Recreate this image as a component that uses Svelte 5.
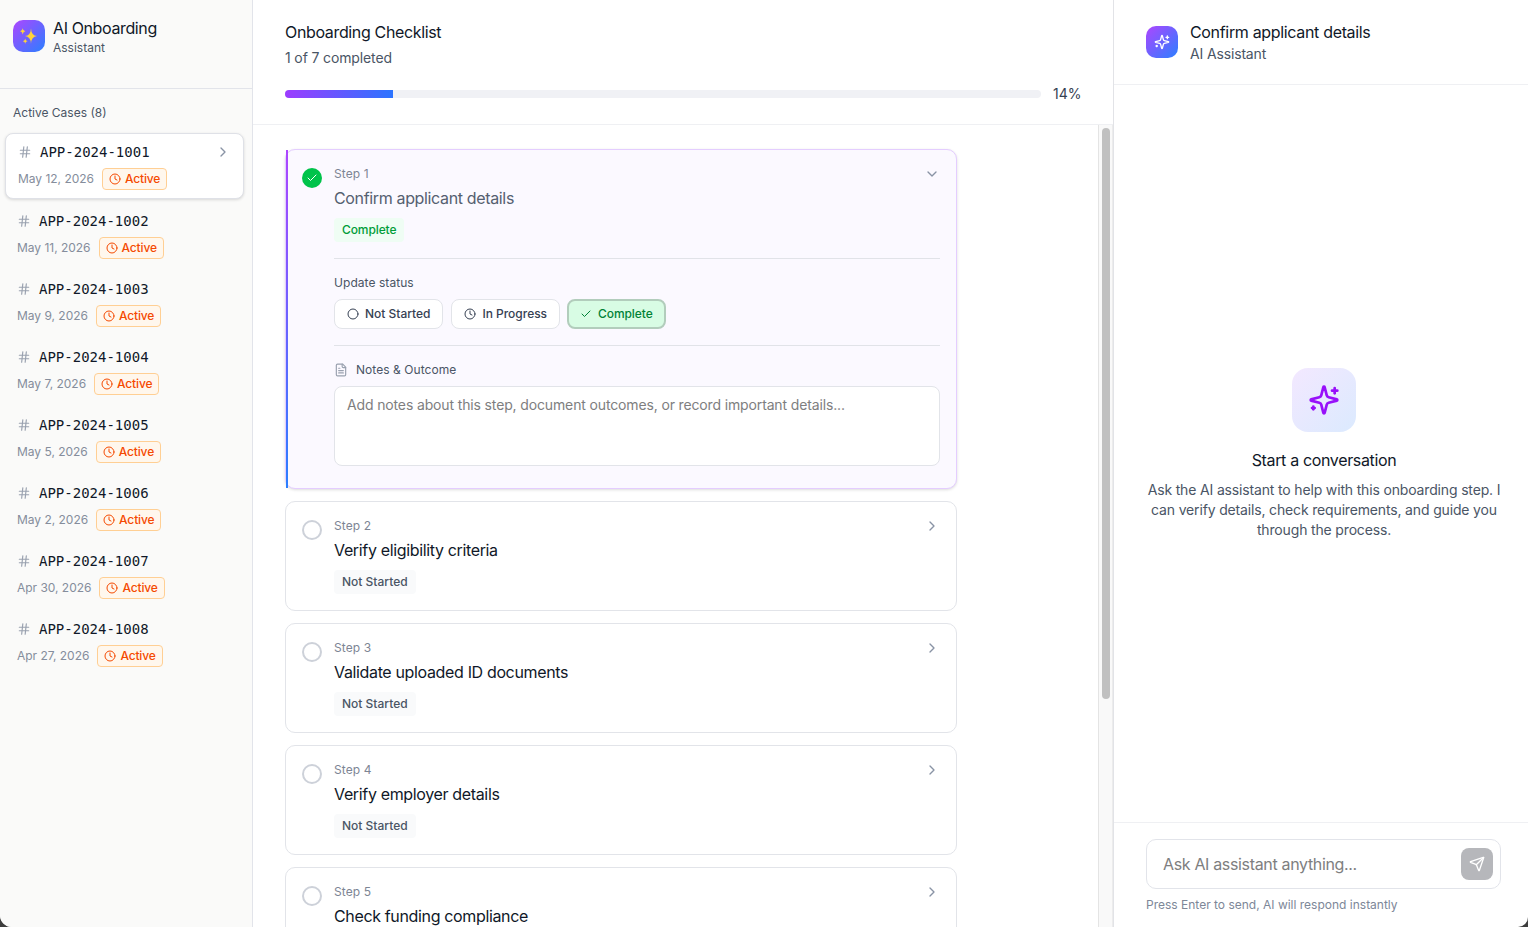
<script>
	let cases = [
		{ id: 'APP-2024-1001', date: 'May 12, 2026' },
		{ id: 'APP-2024-1002', date: 'May 11, 2026' },
		{ id: 'APP-2024-1003', date: 'May 9, 2026' },
		{ id: 'APP-2024-1004', date: 'May 7, 2026' },
		{ id: 'APP-2024-1005', date: 'May 5, 2026' },
		{ id: 'APP-2024-1006', date: 'May 2, 2026' },
		{ id: 'APP-2024-1007', date: 'Apr 30, 2026' },
		{ id: 'APP-2024-1008', date: 'Apr 27, 2026' },
	];

	let steps = [
		{ title: 'Confirm applicant details', status: 'Complete', notes: '' },
		{ title: 'Verify eligibility criteria', status: 'Not Started', notes: '' },
		{ title: 'Validate uploaded ID documents', status: 'Not Started', notes: '' },
		{ title: 'Verify employer details', status: 'Not Started', notes: '' },
		{ title: 'Check funding compliance', status: 'Not Started', notes: '' },
	];

	const totalSteps = 7;
	const statuses = [
		{ label: 'Not Started', icon: 'circle' },
		{ label: 'In Progress', icon: 'clock' },
		{ label: 'Complete', icon: 'check' },
	];

	const icons = {
		hash: ['M4 9h16', 'M4 15h16', 'M10 3 8 21', 'M16 3l-2 18'],
		circle: [],
		clock: ['M12 6v6l4 2'],
		check: ['M20 6 9 17l-5-5'],
		right: ['m9 18 6-6-6-6'],
		down: ['m6 9 6 6 6-6'],
		file: [
			'M15 2H6a2 2 0 0 0-2 2v16a2 2 0 0 0 2 2h12a2 2 0 0 0 2-2V7Z',
			'M14 2v4a2 2 0 0 0 2 2h4',
			'M10 9H8',
			'M16 13H8',
			'M16 17H8',
		],
		sparkles: [
			'M9.937 15.5A2 2 0 0 0 8.5 14.063l-6.135-1.582a.5.5 0 0 1 0-.962L8.5 9.936A2 2 0 0 0 9.937 8.5l1.582-6.135a.5.5 0 0 1 .963 0L14.063 8.5A2 2 0 0 0 15.5 9.937l6.135 1.581a.5.5 0 0 1 0 .964L15.5 14.063a2 2 0 0 0-1.437 1.437l-1.582 6.135a.5.5 0 0 1-.963 0z',
			'M20 3v4',
			'M22 5h-4',
			'M4 17v2',
			'M5 18H3',
		],
		send: [
			'M14.536 21.686a.5.5 0 0 0 .937-.024l6.5-19a.496.496 0 0 0-.635-.635l-19 6.5a.5.5 0 0 0-.024.937l7.93 3.18a2 2 0 0 1 1.112 1.11z',
			'm21.854 2.147-10.94 10.939',
		],
	};

	let selectedCase = 'APP-2024-1001';
	let openStep = 0;
	let message = '';

	$: completed = steps.filter((s) => s.status === 'Complete').length;
	$: percent = Math.round((completed / totalSteps) * 100);

	function setStatus(i, status) {
		steps[i].status = status;
	}
</script>

{#snippet icon(name, size)}
	<svg class="icon" width={size} height={size} viewBox="0 0 24 24">
		{#if name === 'circle' || name === 'clock'}
			<circle cx="12" cy="12" r="10" />
		{/if}
		{#each icons[name] as d}
			<path {d} />
		{/each}
	</svg>
{/snippet}

<div class="app">
	<aside class="sidebar">
		<div class="brand">
			<div class="logo">
				<svg width="18" height="18" viewBox="0 0 18 18" fill="#ffd43b">
					<path d="M11 1.5Q11.4 8.6 17 9Q11.4 9.4 11 16.8Q10.6 9.4 5 9Q10.6 8.6 11 1.5z" />
					<path d="M2.7 1.2Q3 4 5.3 4.3Q3 4.6 2.7 7.4Q2.4 4.6 .1 4.3Q2.4 4 2.7 1.2z" />
					<path d="M5.2 11.6Q5.4 13.9 7.5 14.2Q5.4 14.5 5.2 16.8Q5 14.5 2.9 14.2Q5 13.9 5.2 11.6z" />
				</svg>
			</div>
			<div>
				<div class="brand-name">AI Onboarding</div>
				<div class="brand-sub">Assistant</div>
			</div>
		</div>
		<div class="cases-title">Active Cases (8)</div>
		<div class="cases">
			{#each cases as c (c.id)}
				<button class="case" class:selected={c.id === selectedCase} on:click={() => (selectedCase = c.id)}>
					<span class="case-row">
						<span class="hash">{@render icon('hash', 14)}</span>
						<span class="case-id">{c.id}</span>
						{#if c.id === selectedCase}
							<span class="chevron">{@render icon('right', 16)}</span>
						{/if}
					</span>
					<span class="case-meta">
						<span class="date">{c.date}</span>
						<span class="active-badge">{@render icon('clock', 12)}Active</span>
					</span>
				</button>
			{/each}
		</div>
	</aside>

	<main class="main">
		<header class="main-header">
			<h1>Onboarding Checklist</h1>
			<p class="count">{completed} of {totalSteps} completed</p>
			<div class="progress">
				<div class="bar">
					<div class="fill" style="width: {(completed / totalSteps) * 100}%"></div>
				</div>
				<span class="percent">{percent}%</span>
			</div>
		</header>
		<div class="scroller">
			<div class="steps">
				{#each steps as step, i}
					<section class="step" class:open={openStep === i}>
						<div class="mark" class:done={step.status === 'Complete'}>
							{#if step.status === 'Complete'}
								{@render icon('check', 12)}
							{/if}
						</div>
						<div class="step-body">
							<button class="step-head" on:click={() => (openStep = openStep === i ? -1 : i)}>
								<span class="step-label">Step {i + 1}</span>
								<span class="chevron">{@render icon(openStep === i ? 'down' : 'right', 16)}</span>
							</button>
							<h2 class:muted={step.status === 'Complete'}>{step.title}</h2>
							<span class="tag" class:green={step.status === 'Complete'}>{step.status}</span>
							{#if openStep === i}
								<div class="part">
									<div class="part-title">Update status</div>
									<div class="status-row">
										{#each statuses as s}
											<button
												class="status"
												class:chosen={s.label === step.status}
												on:click={() => setStatus(i, s.label)}
											>
												{@render icon(s.icon, 12)}<span>{s.label}</span>
											</button>
										{/each}
									</div>
								</div>
								<div class="part">
									<div class="part-title with-icon">
										<span class="file">{@render icon('file', 14)}</span>Notes &amp; Outcome
									</div>
									<textarea
										bind:value={step.notes}
										placeholder="Add notes about this step, document outcomes, or record important details..."
									></textarea>
								</div>
							{/if}
						</div>
					</section>
				{/each}
			</div>
			<div class="track"><div class="thumb"></div></div>
		</div>
	</main>

	<aside class="assistant">
		<header class="assistant-header">
			<div class="logo">{@render icon('sparkles', 16)}</div>
			<div>
				<div class="assistant-title">Confirm applicant details</div>
				<div class="assistant-sub">AI Assistant</div>
			</div>
		</header>
		<div class="empty">
			<div class="empty-icon">{@render icon('sparkles', 32)}</div>
			<h3>Start a conversation</h3>
			<p>
				Ask the AI assistant to help with this onboarding step. I can verify details, check
				requirements, and guide you through the process.
			</p>
		</div>
		<footer>
			<div class="ask">
				<input bind:value={message} placeholder="Ask AI assistant anything..." />
				<button class="send" aria-label="Send">{@render icon('send', 16)}</button>
			</div>
			<div class="hint">Press Enter to send, AI will respond instantly</div>
		</footer>
	</aside>
</div>

<style>
	:global(body) {
		background: #3d3d3d;
	}
	.app {
		display: flex;
		height: 927px;
		overflow: hidden;
		background: #fff;
		border-radius: 0 0 10px 12px;
		font-family: Inter, "Liberation Sans", sans-serif;
		font-size: 16px;
		line-height: 24px;
		color: #101828;
	}
	.app * {
		box-sizing: border-box;
	}
	h1, h2, h3, p {
		margin: 0;
		font-size: 16px;
		font-weight: 400;
		letter-spacing: -0.35px;
	}
	button, input, textarea {
		font-family: inherit;
		color: inherit;
	}
	button {
		border: none;
		background: none;
		padding: 0;
		cursor: pointer;
		text-align: left;
	}
	.icon {
		display: block;
		flex: none;
		fill: none;
		stroke: currentColor;
		stroke-width: 2;
		stroke-linecap: round;
		stroke-linejoin: round;
	}
	.logo {
		display: flex;
		align-items: center;
		justify-content: center;
		width: 32px;
		height: 32px;
		border-radius: 10px;
		background: linear-gradient(135deg, #ad46ff, #2b7fff);
		color: #fff;
	}
	.chevron {
		color: #8993a5;
	}

	.sidebar {
		width: 253px;
		flex: none;
		border-right: 1px solid #e2e4ea;
		background: #fafaf9;
	}
	.brand {
		display: flex;
		gap: 8px;
		height: 89px;
		padding: 20px 13px;
		border-bottom: 1px solid #e2e4ea;
	}
	.brand-name {
		line-height: 17px;
		letter-spacing: -0.38px;
	}
	.brand-sub {
		margin-top: 3px;
		font-size: 12px;
		line-height: 16px;
		color: #4a5565;
	}
	.cases-title {
		padding: 16px 13px 12px;
		font-size: 12px;
		line-height: 16px;
		color: #4a5565;
	}
	.cases {
		display: flex;
		flex-direction: column;
		gap: 4px;
		padding: 0 8px 0 5px;
	}
	.case {
		display: block;
		padding: 8px 12px;
		border-radius: 8px;
	}
	.case.selected {
		background: #fff;
		border: 1px solid #dfe1e7;
		box-shadow: 0 1px 3px rgba(0, 0, 0, 0.14);
	}
	.case-row {
		display: flex;
		align-items: center;
		gap: 8px;
		height: 20px;
	}
	.case-row .chevron {
		margin-left: auto;
	}
	.hash {
		color: #99a1af;
	}
	.case-id {
		font-family: "DejaVu Sans Mono", monospace;
		font-size: 14px;
		line-height: 20px;
	}
	.case-meta {
		display: flex;
		align-items: center;
		gap: 8px;
		margin-top: 6px;
		font-size: 12px;
		line-height: 16px;
	}
	.date {
		letter-spacing: -0.02px;
		color: #858d9c;
	}
	.active-badge {
		display: flex;
		align-items: center;
		gap: 4px;
		height: 22px;
		padding: 0 6px;
		border: 1px solid #ffcf94;
		border-radius: 4px;
		background: #fff7ed;
		color: #f54900;
		font-weight: 500;
		letter-spacing: -0.15px;
	}

	.main {
		flex: 1;
		min-width: 0;
		display: flex;
		flex-direction: column;
	}
	.main-header {
		padding: 20px 32px;
		border-bottom: 1px solid #eff0f3;
	}
	.main-header .count {
		margin-top: 4px;
		font-size: 14px;
		line-height: 20px;
		letter-spacing: -0.13px;
		color: #4a5565;
	}
	.progress {
		display: flex;
		align-items: center;
		gap: 12px;
		margin-top: 16px;
	}
	.bar {
		flex: 1;
		height: 8px;
		overflow: hidden;
		border-radius: 4px;
		background: #f0f1f5;
	}
	.fill {
		height: 100%;
		background: linear-gradient(90deg, #9d3cff, #2b74ff);
	}
	.percent {
		width: 28px;
		font-size: 14px;
		line-height: 20px;
		color: #364153;
	}
	.scroller {
		flex: 1;
		min-height: 0;
		display: flex;
		justify-content: space-between;
		overflow: hidden;
	}
	.steps {
		display: flex;
		flex-direction: column;
		gap: 12px;
		width: 736px;
		padding: 24px 32px;
	}
	.track {
		width: 15px;
		padding: 3px 2px 0 3px;
		border-left: 1px solid #e4e4e4;
		border-right: 1px solid #ececec;
		background: #f9f9f9;
	}
	.thumb {
		width: 8px;
		height: 571px;
		border-radius: 4px;
		background: #c0c0c0;
	}
	.step {
		position: relative;
		display: flex;
		flex: none;
		gap: 12px;
		padding: 16px;
		border: 1px solid #e2e4e9;
		border-radius: 10px;
		background: #fff;
	}
	.step.open {
		border-color: #e4cdff;
		background: #fbf9ff;
		box-shadow: 0 1px 3px rgba(0, 0, 0, 0.14);
	}
	.step.open::before {
		content: '';
		position: absolute;
		left: 0;
		top: 0;
		bottom: 0;
		width: 2px;
		background: linear-gradient(#ad46ff, #2b7fff);
	}
	.mark {
		display: flex;
		align-items: center;
		justify-content: center;
		flex: none;
		width: 20px;
		height: 20px;
		margin-top: 2px;
		border: 2px solid #cdd1d9;
		border-radius: 50%;
	}
	.mark.done {
		border: none;
		background: #00c34a;
		color: #fff;
	}
	.step-body {
		flex: 1;
	}
	.step-head {
		display: flex;
		justify-content: space-between;
		width: 100%;
		height: 16px;
		font-size: 12px;
		line-height: 16px;
	}
	.step-label {
		letter-spacing: 0.1px;
		color: #7d8594;
	}
	h2 {
		margin-top: 4px;
	}
	h2.muted {
		color: #556070;
	}
	.tag {
		display: block;
		width: fit-content;
		margin-top: 8px;
		padding: 4px 8px;
		border-radius: 4px;
		background: #f9fafb;
		color: #4a5565;
		font-size: 12px;
		line-height: 16px;
		font-weight: 500;
	}
	.tag.green {
		background: #effdf4;
		color: #009c38;
		letter-spacing: -0.1px;
	}
	.part {
		margin-top: 16px;
		padding-top: 16px;
		border-top: 1px solid #e1e3e8;
	}
	.part-title {
		margin-bottom: 8px;
		font-size: 12px;
		line-height: 16px;
		letter-spacing: 0.06px;
		color: #4a5565;
	}
	.with-icon {
		display: flex;
		align-items: center;
		gap: 8px;
	}
	.file {
		color: #99a1af;
	}
	.status-row {
		display: flex;
		gap: 8px;
	}
	.status {
		display: flex;
		align-items: center;
		gap: 6px;
		height: 30px;
		padding: 0 12px;
		border: 1px solid #e2e4e9;
		border-radius: 8px;
		background: #fff;
		color: #364153;
		font-size: 12px;
		font-weight: 500;
		letter-spacing: -0.02px;
	}
	.status span {
		padding-bottom: 2px;
	}
	.status.chosen {
		margin-left: -1px;
		padding: 0 11px;
		border: 2px solid #b2cdbc;
		background: #d8fce4;
		color: #008236;
		letter-spacing: -0.08px;
	}
	textarea {
		display: block;
		width: 100%;
		height: 80px;
		margin-bottom: 6px;
		padding: 8px 12px;
		border: 1px solid #e2e4e9;
		border-radius: 8px;
		background: #fff;
		font-size: 14px;
		line-height: 20px;
		letter-spacing: -0.14px;
		resize: none;
	}
	textarea::placeholder, input::placeholder {
		color: #7e7e80;
		opacity: 1;
	}

	.assistant {
		width: 415px;
		flex: none;
		display: flex;
		flex-direction: column;
		border-left: 1px solid #e2e3e7;
	}
	.assistant-header {
		display: flex;
		align-items: center;
		gap: 12px;
		padding: 20px 32px;
		border-bottom: 1px solid #eff0f3;
	}
	.assistant-title {
		letter-spacing: -0.33px;
	}
	.assistant-sub {
		font-size: 14px;
		line-height: 20px;
		letter-spacing: -0.15px;
		color: #4a5565;
	}
	.empty {
		flex: 1;
		display: flex;
		flex-direction: column;
		align-items: center;
		justify-content: center;
		padding: 0 24px 0 30px;
		text-align: center;
	}
	.empty-icon {
		display: flex;
		align-items: center;
		justify-content: center;
		width: 64px;
		height: 64px;
		margin-bottom: 16px;
		border-radius: 16px;
		background: linear-gradient(135deg, #f3e8ff, #dbeafe);
		color: #9810fa;
	}
	.empty p {
		margin-top: 8px;
		font-size: 14px;
		line-height: 20px;
		letter-spacing: -0.16px;
		color: #4a5565;
	}
	footer {
		height: 105px;
		padding: 16px 27px 0 32px;
		border-top: 1px solid #eff0f3;
	}
	.ask {
		display: flex;
		align-items: center;
		height: 50px;
		padding: 0 7px 0 16px;
		border: 1px solid #e2e4ea;
		border-radius: 10px;
	}
	input {
		flex: 1;
		min-width: 0;
		padding: 0;
		border: none;
		outline: none;
		background: none;
		font-size: 16px;
		letter-spacing: -0.34px;
	}
	.send {
		display: flex;
		align-items: center;
		justify-content: center;
		width: 32px;
		height: 32px;
		border-radius: 8px;
		background: #b6b7bb;
		color: #fff;
	}
	.hint {
		margin-top: 8px;
		font-size: 12px;
		line-height: 16px;
		color: #7d8798;
	}
</style>
